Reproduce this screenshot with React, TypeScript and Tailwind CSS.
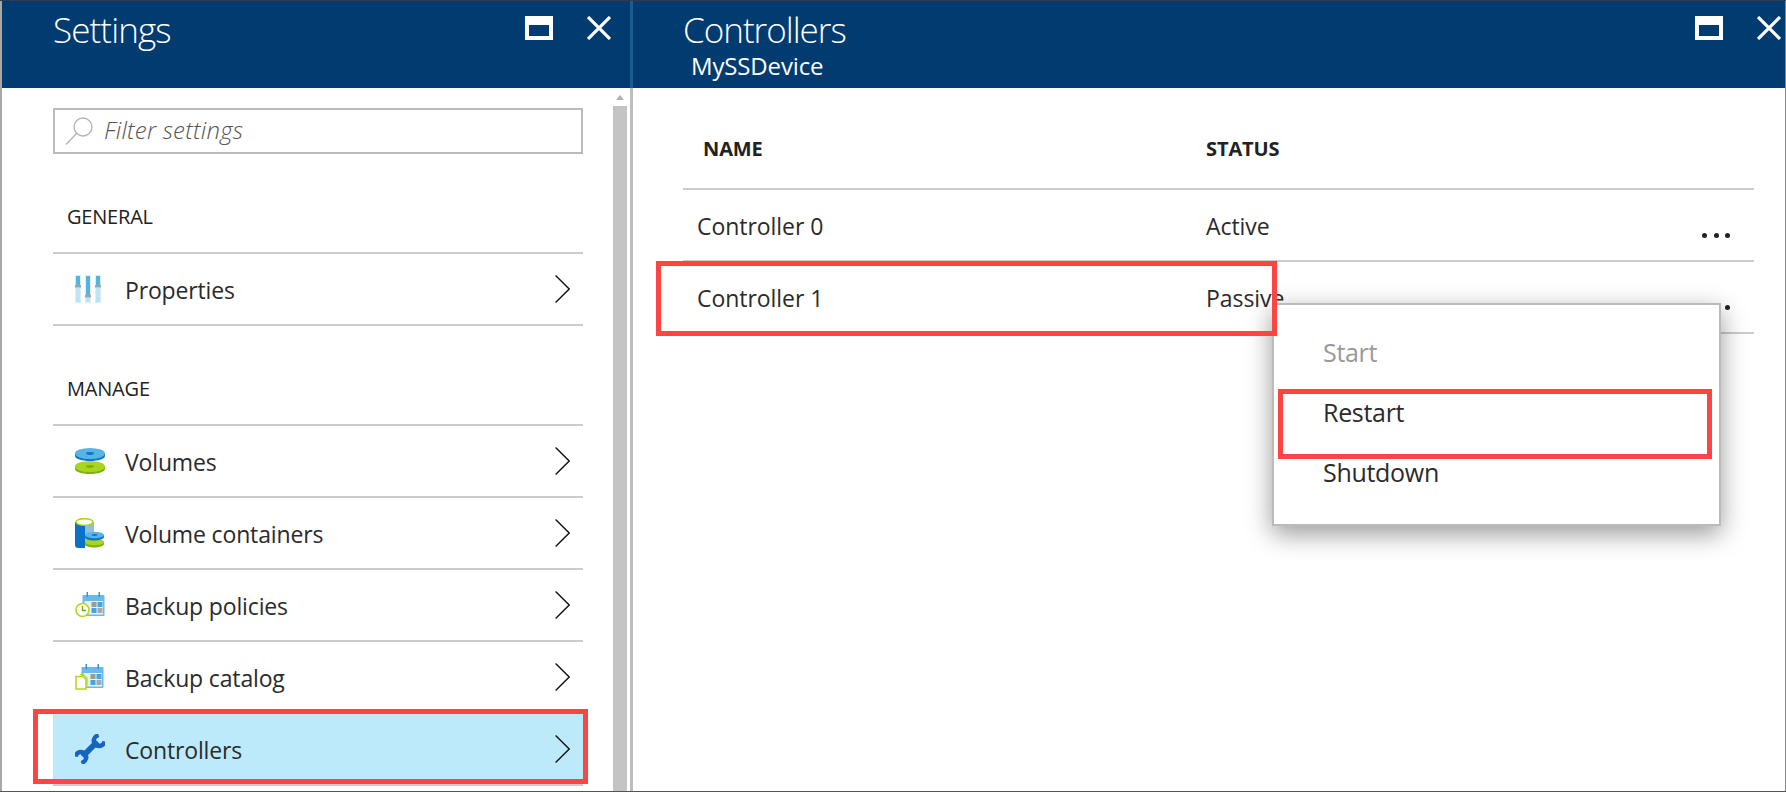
import React from "react";

function Chevron() {
  return (
    <svg width="15" height="28" viewBox="0 0 15 28" fill="none" stroke="#111" strokeWidth="1.4" className="shrink-0">
      <path d="M0.6 0.5 14.2 14 0.6 27.5" />
    </svg>
  );
}

function PropertiesIcon() {
  return (
    <svg width="26" height="28" viewBox="0 0 26 28">
      {[0, 10, 20].map((x, i) => {
        const y = i === 1 ? 20 : 10;
        return (
          <g key={x}>
            <rect x={x} y="0" width="6" height="28" fill="#d8eef8" />
            <rect x={x + 1} y="1" width="4" height={y} fill="#56b2e2" />
            <rect x={x + 1} y={y + 3} width="4" height={24 - y} fill="#bde3f4" />
            <rect x={x} y={y} width="6" height="2.500" fill="#9aa6ab" />
          </g>
        );
      })}
    </svg>
  );
}

function VolumesIcon() {
  return (
    <svg width="30" height="26" viewBox="0 0 30 26">
      <path d="M0 18.500v2.500c0 2.700 6.700 5 15 5s15-2.300 15-5v-2.500z" fill="#7fb40a" />
      <ellipse cx="15" cy="18.500" rx="15" ry="5.500" fill="#a9d61c" />
      <ellipse cx="15" cy="18.500" rx="4" ry="1.400" fill="#7fb40a" />
      <path d="M0 5.500V8c0 2.700 6.700 5 15 5s15-2.300 15-5V5.500z" fill="#0a78c8" />
      <ellipse cx="15" cy="5.500" rx="15" ry="5.500" fill="#59b4e6" />
      <ellipse cx="15" cy="5.500" rx="4" ry="1.400" fill="#0a78c8" />
    </svg>
  );
}

function ContainersIcon() {
  return (
    <svg width="29" height="30" viewBox="0 0 29 30">
      <path d="M0 4h10v26H3c-2 0-3-1-3-3z" fill="#0a72c6" />
      <path d="M10 4h9v24H10z" fill="#8fbde0" />
      <ellipse cx="9.500" cy="4" rx="8.500" ry="3.300" fill="#fff" stroke="#a9d61c" strokeWidth="1.500" />
      <path d="M10 24v2c0 2 4 3.500 9 3.500s10-1.500 10-3.500v-2z" fill="#7fb40a" />
      <ellipse cx="19.500" cy="24" rx="9.500" ry="3.300" fill="#a9d61c" />
      <path d="M10 17v2c0 2 4 3.500 9 3.500s10-1.500 10-3.500v-2z" fill="#0a78c8" />
      <ellipse cx="19.500" cy="17" rx="9.500" ry="3.300" fill="#59b4e6" />
      <ellipse cx="19.500" cy="17" rx="3" ry="1" fill="#0a78c8" />
    </svg>
  );
}

function CalendarGrid() {
  return (
    <g>
      <rect x="0" y="3" width="22" height="21" rx="1" fill="#68bbe8" />
      <rect x="4" y="0" width="1.500" height="5" fill="#3d93c9" />
      <rect x="16" y="0" width="1.500" height="5" fill="#3d93c9" />
      <rect x="2" y="9" width="18.500" height="13.500" fill="#e3f3fb" />
      <rect x="9" y="10" width="5" height="5" fill="#9a9a9a" />
      <rect x="15" y="10" width="5" height="5" fill="#3fa6e0" />
      <rect x="9" y="16" width="5" height="5" fill="#3fa6e0" />
      <rect x="15" y="16" width="5" height="5" fill="#a8a8a8" />
    </g>
  );
}

function PoliciesIcon() {
  return (
    <svg width="30" height="26" viewBox="0 0 30 26">
      <g transform="translate(7.500 0)">
        <CalendarGrid />
      </g>
      <circle cx="7.500" cy="18" r="6.500" fill="#fff" stroke="#b5d81f" strokeWidth="1.600" />
      <path d="M7.500 14v4.500h3.500" fill="none" stroke="#7f9a18" strokeWidth="1.300" />
    </svg>
  );
}

function CatalogIcon() {
  return (
    <svg width="29" height="26" viewBox="0 0 29 26">
      <g transform="translate(6.500 0)">
        <CalendarGrid />
      </g>
      <path d="M1 12.500h7l3 3v9.500H1z" fill="#fff" stroke="#b5d81f" strokeWidth="1.600" />
      <path d="M5 10.500h3l4 3.500v8" fill="none" stroke="#b5d81f" strokeWidth="1.200" />
    </svg>
  );
}

function WrenchIcon() {
  return (
    <svg width="30" height="30" viewBox="1 1 28 28" fill="none" stroke="#1565c0">
      <path d="M8 22 22 8" strokeWidth="5.500" />
      <path d="M23 2C18 3.500 17.300 8.500 20 11s7.500 1.500 8.500-3" strokeWidth="4" />
      <path d="M7 28C12 26.500 12.700 21.500 10 19s-7.500-1.500-8.500 3" strokeWidth="4" />
    </svg>
  );
}

function SearchIcon() {
  return (
    <svg width="28" height="28" viewBox="0 0 28 28" fill="none" stroke="#b5b5b5" strokeWidth="1.400" className="shrink-0">
      <ellipse cx="18" cy="10" rx="9" ry="9" />
      <path d="M11.500 16.500 1 27.500" />
    </svg>
  );
}

function HeaderButtons() {
  return (
    <>
      <div className="w-[28px] h-[24px] border-x-[4px] border-b-[4px] border-t-[9px] border-white shrink-0" />
      <svg width="24" height="24" viewBox="0 0 24 24" stroke="#fff" strokeWidth="3.200" className="shrink-0">
        <path d="M1 1 23 23M23 1 1 23" />
      </svg>
    </>
  );
}

function Row({ icon, label, active }: { icon: React.ReactNode; label: string; active?: boolean }) {
  return (
    <div className={"h-[72px] border-b-2 border-[#cccccc] " + (active ? "bg-[#bdeafb]" : "")}>
      <div className="h-[70px] flex items-center pr-[13px]">
        <div className="w-[72px] pl-[22px] shrink-0 flex items-center">{icon}</div>
        <span className="flex-1 pt-[2px] text-[23px] font-[380] text-[#2b2b2b] tracking-[-0.15px]">{label}</span>
        <Chevron />
      </div>
    </div>
  );
}

function SectionTitle({ children }: { children: React.ReactNode }) {
  return (
    <div className="h-[100px] flex items-end pb-[25px] pl-[14px] text-[20px] font-medium text-[#222] border-b-2 border-[#cccccc] tracking-[-0.2px] leading-none">
      {children}
    </div>
  );
}

function TableRow({ name, status, dots }: { name: string; status: string; dots: number }) {
  return (
    <div className="h-[72px] border-b-2 border-[#cccccc] flex items-center text-[23px] font-[380] text-[#2b2b2b] tracking-[-0.05px] pr-[24px]">
      <div className="w-[523px] pl-[14px] pt-[2px] shrink-0">{name}</div>
      <div className="flex-1 pt-[2px]">{status}</div>
      <div className="flex gap-[6.500px] mt-[20px]">
        {[...Array(dots)].map((_, i) => (
          <span key={i} className="w-[5px] h-[5px] rounded-full bg-[#222]" />
        ))}
      </div>
    </div>
  );
}

export default function App() {
  return (
    <div className="relative w-[1786px] h-[792px] overflow-hidden bg-white border-t border-b border-t-[#2f3d4a] border-b-[#555] font-['Open_Sans','Noto_Sans',sans-serif]">
      <div className="flex h-full">
        {/* settings blade */}
        <div className="w-[630px] shrink-0 flex flex-col border-l-2 border-[#a8a8a8]">
          <div className="h-[87px] shrink-0 bg-[#023b70] flex items-start pt-[9px] pl-[51px] text-white">
            <h1 className="flex-1 text-[35px] leading-[40px] font-light tracking-[-0.9px]">Settings</h1>
            <div className="flex gap-[34px] pr-[19px] pt-[6px]">
              <HeaderButtons />
            </div>
          </div>
          <div className="flex-1 flex min-h-0">
            <div className="flex-1 pt-[20px] pl-[51px] pr-[30px]">
              <div className="h-[46px] border-2 border-[#bbbbbb] flex items-center pl-[10px] gap-[11px]">
                <SearchIcon />
                <span className="italic text-[24px] font-[350] text-[#555] tracking-[0.2px] -translate-y-[1px]">Filter settings</span>
              </div>
              <SectionTitle>GENERAL</SectionTitle>
              <Row icon={<PropertiesIcon />} label="Properties" />
              <SectionTitle>MANAGE</SectionTitle>
              <Row icon={<VolumesIcon />} label="Volumes" />
              <Row icon={<ContainersIcon />} label="Volume containers" />
              <Row icon={<PoliciesIcon />} label="Backup policies" />
              <Row icon={<CatalogIcon />} label="Backup catalog" />
              <Row icon={<WrenchIcon />} label="Controllers" active />
            </div>
            <div className="w-[14px] mr-[3px] flex flex-col shrink-0">
              <div className="h-[18px] flex items-center justify-center">
                <span className="w-0 h-0 border-x-[4px] border-x-transparent border-b-[5px] border-b-[#b0b0b0]" />
              </div>
              <div className="flex-1 bg-[#c4c4c4]" />
            </div>
          </div>
        </div>
        <div className="w-[3px] shrink-0 flex flex-col">
          <div className="h-[87px] bg-[#1c5c8c]" />
          <div className="flex-1 bg-[#bdbdbd]" />
        </div>
        {/* controllers blade */}
        <div className="flex-1 flex flex-col border-r border-[#888]">
          <div className="h-[87px] shrink-0 bg-[#023b70] flex items-start pt-[9px] pl-[50px] text-white">
            <div className="flex-1">
              <h1 className="text-[35px] leading-[40px] font-light tracking-[-1px]">Controllers</h1>
              <p className="text-[24px] leading-[28px] mt-[2px] ml-[8px] tracking-[-0.15px]">MySSDevice</p>
            </div>
            <div className="flex gap-[34px] pt-[6px] pr-[4px]">
              <HeaderButtons />
            </div>
          </div>
          <div className="pl-[50px] pr-[31px]">
            <div className="h-[102px] pt-[22px] border-b-2 border-[#cccccc] flex items-center text-[20px] font-bold text-[#222] tracking-[-0.1px]">
              <div className="w-[523px] pl-[20px] shrink-0">NAME</div>
              <div>STATUS</div>
            </div>
            <TableRow name="Controller 0" status="Active" dots={3} />
            <TableRow name="Controller 1" status="Passive" dots={3} />
          </div>
        </div>
      </div>

      {/* row action menu */}
      <div className="absolute left-[1272px] top-[302px] w-[449px] h-[223px] bg-white border-2 border-[#bbbbbb] pt-[18px] pl-[49px] text-[25px] font-[380] tracking-[-0.3px] text-[#2b2b2b] shadow-[0_8px_24px_rgba(0,0,0,0.4)]">
        <div className="h-[60px] flex items-center text-[#999]">Start</div>
        <div className="h-[60px] flex items-center">Restart</div>
        <div className="h-[60px] flex items-center">Shutdown</div>
      </div>

      {/* red callouts */}
      <div className="absolute left-[33px] top-[708px] w-[555px] h-[75px] border-[5px] border-[#ff4444]" />
      <div className="absolute left-[656px] top-[260px] w-[621px] h-[75px] border-[5px] border-[#ff4444]" />
      <div className="absolute left-[1278px] top-[388px] w-[434px] h-[70px] border-[5px] border-[#ff4444]" />
    </div>
  );
}
